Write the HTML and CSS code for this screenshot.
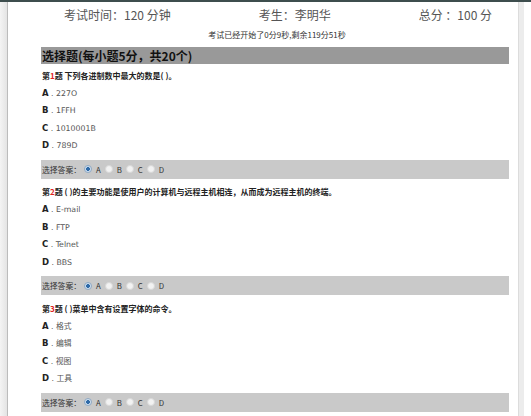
FILE: index.html
```html
<!DOCTYPE html>
<html lang="zh-CN">
<head>
<meta charset="utf-8">
<title>考试</title>
<link rel="stylesheet" href="styles.css">
</head>
<body>
<div class="frame">
  <div class="gutter-left"></div>
  <div class="paper">
    <div class="exam-head">
      <span>考试时间：120 分钟</span>
      <span>考生：李明华</span>
      <span>总分 ：100 分</span>
    </div>
    <div class="timer">考试已经开始了0分9秒,剩余119分51秒</div>
    <div class="section-title">选择题(每小题5分，共20个)</div>

    <div class="question first">
      <p class="q-text">第<span class="num">1</span>题 下列各进制数中最大的数是( )。</p>
      <p class="opt"><b>A</b> . 227O</p>
      <p class="opt"><b>B</b> . 1FFH</p>
      <p class="opt"><b>C</b> . 1010001B</p>
      <p class="opt"><b>D</b> . 789D</p>
      <div class="answer">选择答案：<span class="radio checked"></span>A<span class="radio"></span>B<span class="radio"></span>C<span class="radio"></span>D</div>
    </div>

    <div class="question">
      <p class="q-text">第<span class="num">2</span>题 ( )的主要功能是使用户的计算机与远程主机相连，从而成为远程主机的终端。</p>
      <p class="opt"><b>A</b> . E-mail</p>
      <p class="opt"><b>B</b> . FTP</p>
      <p class="opt"><b>C</b> . Telnet</p>
      <p class="opt"><b>D</b> . BBS</p>
      <div class="answer">选择答案：<span class="radio checked"></span>A<span class="radio"></span>B<span class="radio"></span>C<span class="radio"></span>D</div>
    </div>

    <div class="question">
      <p class="q-text">第<span class="num">3</span>题 ( )菜单中含有设置字体的命令。</p>
      <p class="opt"><b>A</b> . 格式</p>
      <p class="opt"><b>B</b> . 编辑</p>
      <p class="opt"><b>C</b> . 视图</p>
      <p class="opt"><b>D</b> . 工具</p>
      <div class="answer">选择答案：<span class="radio checked"></span>A<span class="radio"></span>B<span class="radio"></span>C<span class="radio"></span>D</div>
    </div>
  </div>
  <div class="gutter-right"></div>
  <div class="outside"></div>
</div>
</body>
</html>
```

FILE: styles.css
```css
html, body {
  margin: 0;
  padding: 0;
  background: #ffffff;
}

body {
  font-family: "Noto Sans CJK SC", "Microsoft YaHei", sans-serif;
  color: #333;
}

.frame {
  display: flex;
  border-top: 2px solid #3e4e4e;
  min-height: 414px;
}

.gutter-left {
  width: 7px;
  flex: none;
  background: linear-gradient(to right, #f4f4f4, #e4e4e4);
  border-right: 1px solid #bcbcbc;
}

.paper {
  flex: 1;
  padding: 4px 9px 0 33px;
  background: #fff;
  border-right: 1px solid #dcdcdc;
}

.gutter-right {
  width: 5px;
  flex: none;
  background: #ececec;
}

.outside {
  width: 7px;
  flex: none;
  background: #fff;
}

.exam-head {
  display: flex;
  justify-content: space-between;
  padding: 0 17px 0 23px;
  height: 18px;
  line-height: 18px;
  font-size: 12px;
  color: #555;
}

.timer {
  margin-top: 6px;
  text-align: center;
  font-size: 8px;
  line-height: 9px;
  color: #333;
  padding-left: 4px;
}

.section-title {
  margin-top: 8px;
  height: 17px;
  line-height: 17px;
  background: #999;
  color: #111;
  font-weight: bold;
  font-size: 12px;
  padding-left: 1px;
}

.question {
  padding-top: 4.5px;
}

.question.first {
  padding-top: 3px;
}

.q-text,
.opt {
  margin: 0;
  height: 17.6px;
  line-height: 17.6px;
  font-size: 8px;
  padding-left: 1px;
  white-space: nowrap;
}

.q-text {
  font-weight: bold;
  color: #222;
}

.num {
  color: #e0201c;
}

.opt {
  font-family: "DejaVu Sans", "Noto Sans CJK SC", sans-serif;
  font-size: 7.8px;
  color: #555;
}

.opt b {
  color: #222;
  font-size: 8.5px;
}

.answer {
  margin-top: 5px;
  height: 19px;
  line-height: 19px;
  background: #c9c9c9;
  font-size: 7.8px;
  color: #333;
  padding-left: 1px;
  display: flex;
  align-items: center;
}

.radio {
  display: inline-block;
  width: 6px;
  height: 6px;
  border-radius: 50%;
  border: 1px solid #d8d8d8;
  background: #f2f2f2;
  margin: 0 4px 0 4px;
}

.radio.checked {
  margin-left: 3px;
  border-color: #8fa9c4;
  background: radial-gradient(circle, #2f6aa8 0 1.6px, #cfe0f0 2.2px);
}
```
